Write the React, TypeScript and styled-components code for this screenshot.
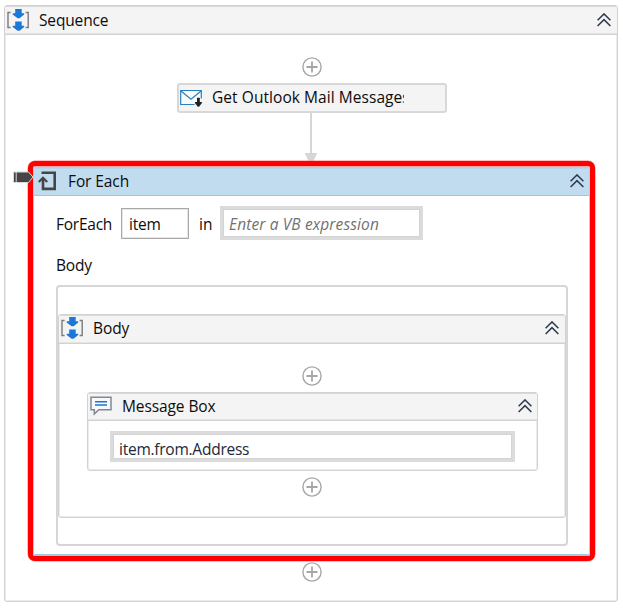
import React from "react";
import styled, { createGlobalStyle } from "styled-components";

const GlobalStyle = createGlobalStyle`
  * { box-sizing: border-box; }
  body {
    margin: 0;
    background: #fff;
    color: #0c0c0c;
    font-family: "Open Sans", "Noto Sans", sans-serif;
    font-size: 15.5px;
  }
  svg { display: block; flex: none; }
`;

const Page = styled.main`
  width: 623px;
  height: 612px;
  padding: 5px 0 0 4px;
  overflow: hidden;
`;

const Frame = styled.section<{ $w: number; $h: number; $top?: number; $left?: number }>`
  flex: none;
  width: ${(p) => p.$w}px;
  height: ${(p) => p.$h}px;
  margin-top: ${(p) => p.$top ?? 0}px;
  margin-left: ${(p) => p.$left ?? 0}px;
  border: 1px solid #d2d2d2;
  border-radius: 3px;
  box-shadow: inset 0 0 0 1px #ececec;
`;

const Header = styled.header<{ $h: number; $pad: number; $right: number; $lift?: number }>`
  display: flex;
  align-items: center;
  height: ${(p) => p.$h}px;
  padding: 0 ${(p) => p.$right}px ${(p) => p.$lift ?? 2}px ${(p) => p.$pad}px;
  background: #f4f4f4;
  border-top: 1px solid #dadada;
  border-bottom: 1px solid #d2d2d2;
  box-shadow: inset 0 -1px #e4e4e4;
`;

const SelectedHeader = styled(Header)`
  background: #c1dcee;
  border-top-color: #b4d6ec;
  border-bottom-color: #9cc8e3;
  box-shadow: none;
`;

const Title = styled.span<{ $gap: number; $track?: number }>`
  flex: 1;
  margin-left: ${(p) => p.$gap}px;
  line-height: 22px;
  white-space: nowrap;
  letter-spacing: ${(p) => p.$track ?? -0.1}px;
`;

const Column = styled.div<{ $left?: number }>`
  display: flex;
  flex-direction: column;
  align-items: center;
  padding-left: ${(p) => p.$left ?? 0}px;
`;

const PlusIcon = styled.svg<{ $top: number }>`
  width: 20px;
  height: 20px;
  margin-top: ${(p) => p.$top}px;
  fill: none;
  stroke: #a6a6a6;
`;

const Collapsed = styled.div`
  display: flex;
  align-items: center;
  width: 270px;
  height: 30px;
  margin-top: 6px;
  padding-left: 1px;
  border: 2px solid #d8d8d8;
  border-radius: 3px;
  background: #f4f4f4;
`;

const ClippedTitle = styled.span`
  width: 192px;
  margin: -2px 0 0 10px;
  line-height: 22px;
  overflow: hidden;
  white-space: nowrap;
  letter-spacing: 0.06px;
`;

const Highlight = styled.div`
  position: relative;
  width: 567px;
  height: 400px;
  margin-right: 1px;
  border: 5px solid #f00;
  border-radius: 7px;
  background: #fff;
  box-shadow: 0 0 0 0.5px #ff8080, inset 0 1px #f3a8ae;
  padding-top: 1px;
`;

const Breakpoint = styled.svg`
  position: absolute;
  left: -20px;
  top: 5px;
`;

const Selected = styled.section`
  height: 389px;
  border: 1px solid #abd0e8;
  border-bottom: 2px solid #9fcbe8;
  border-radius: 2px;
`;

const Fields = styled.div`
  display: flex;
  align-items: center;
  height: 34px;
  margin-top: 10px;
  padding-left: 22px;
`;

const Label = styled.span<{ $w: number; $indent?: number; $track?: number }>`
  flex: none;
  width: ${(p) => p.$w}px;
  padding-left: ${(p) => p.$indent ?? 0}px;
  padding-top: 2px;
  line-height: 22px;
  letter-spacing: ${(p) => p.$track ?? 0}px;
`;

const VariableBox = styled.div`
  width: 68px;
  height: 31px;
  border: 1px solid #a8a8a8;
  box-shadow: inset 0 0 0 1px #e6e6e6;
  padding-left: 7px;
  line-height: 31px;
  letter-spacing: -0.25px;
`;

const ExpressionBox = styled.div<{ $w: number; $h: number; $top?: number; $left?: number }>`
  width: ${(p) => p.$w}px;
  height: ${(p) => p.$h}px;
  margin-top: ${(p) => p.$top ?? 0}px;
  margin-left: ${(p) => p.$left ?? 0}px;
  border: 3px solid #dbdbdb;
  box-shadow: inset 0 0 0 1px #d4d4d4;
  padding-left: 6px;
  line-height: 30px;
  white-space: nowrap;
  color: #20293a;
  letter-spacing: -0.25px;
`;

const Placeholder = styled.em`
  color: #717171;
  letter-spacing: 0.12px;
`;

const BodyLabel = styled.div`
  height: 22px;
  margin: 14px 0 9px 22px;
  line-height: 22px;
  letter-spacing: -0.15px;
`;

const DropZone = styled.div`
  width: 512px;
  height: 261px;
  margin-left: 22px;
  border: 2px solid #d6d6d6;
  border-radius: 4px;
`;

function Add({ top }: { top: number }) {
  return (
    <PlusIcon $top={top} viewBox="0 0 20 20">
      <circle cx="10" cy="10" r="9.1" strokeWidth="1.4" />
      <path d="M10 4.5v11M4.5 10h11" strokeWidth="1.8" />
    </PlusIcon>
  );
}

function Chevrons() {
  return (
    <svg width="14" height="14" viewBox="0 0 14 14" fill="none" stroke="#2f3b4f" strokeWidth="1.5">
      <path d="M.6 7.3 7 .9l6.4 6.4M.6 13 7 6.6l6.4 6.4" />
    </svg>
  );
}

function SequenceIcon() {
  return (
    <svg width="22" height="22" viewBox="0 0 22 22">
      <path d="M3.6 3.500H1v15h2.600M18.600 3.500h2.600v15h-2.600" fill="none" stroke="#7b7b7b" strokeWidth="1.400" />
      <path d="M8.200 0h6.500v4.300h2.500v1.200L12.600 9.200h-2L5.700 5.500V4.300h2.500zM8.200 12.500h6.500v4.300h2.500V18L12.600 21.700h-2L5.700 18v-1.200h2.500z" fill="#1b78d8" />
    </svg>
  );
}

function MailIcon() {
  return (
    <svg width="22" height="18" viewBox="0 0 22 18">
      <path d="M14.500 15.500H.700V1.500h20.600v8" fill="#f8fbfd" stroke="#2b7fba" strokeWidth="1.200" />
      <path d="m1 2 10 8.300L21 2" fill="none" stroke="#2b7fba" strokeWidth="1.200" />
      <path d="M17 8.800h2.800v4.200h2.100v1L19 17.800h-1.200L14.900 14v-1H17z" fill="#202020" />
    </svg>
  );
}

function LoopIcon() {
  return (
    <svg width="19" height="20" viewBox="0 0 19 20" fill="none" stroke="#454545" strokeWidth="2.600">
      <path d="M3.500 1.700h13.200v16.200H5V7.500" />
      <path d="M.800 11 5 6.800 9.200 11" strokeWidth="2.300" />
    </svg>
  );
}

function MessageIcon() {
  return (
    <svg width="22" height="20" viewBox="0 0 22 20" fill="none">
      <path d="M1 1.200h20v12.600H8.800L4.300 18v-4.200H1z" fill="#f8f8f8" stroke="#7e8a93" strokeWidth="1.500" />
      <path d="M5 5.700h12M5 9h12" stroke="#1c73dc" strokeWidth="1.400" />
    </svg>
  );
}

export default function App() {
  return (
    <>
      <GlobalStyle />
      <Page>
        <Frame $w={614} $h={597}>
          <Header $h={29} $pad={2} $right={6}>
            <SequenceIcon />
            <Title $gap={10} $track={-0.15}>Sequence</Title>
            <Chevrons />
          </Header>
          <Column $left={2}>
            <Add top={22} />
            <Collapsed>
              <MailIcon />
              <ClippedTitle>Get Outlook Mail Messages</ClippedTitle>
            </Collapsed>
            <svg width="14" height="48" viewBox="0 0 14 48" fill="#d6d6d6">
              <path d="M5 0h2v40h5.300L8.500 48h-5L-.3 40H5z" />
            </svg>
            <Highlight>
              <Selected>
                <SelectedHeader $h={28} $pad={4} $right={5}>
                  <LoopIcon />
                  <Title $gap={11}>For Each</Title>
                  <Chevrons />
                </SelectedHeader>
                <Fields>
                  <Label $w={65} $track={-0.25}>ForEach</Label>
                  <VariableBox>item</VariableBox>
                  <Label $w={31} $indent={10}>in</Label>
                  <ExpressionBox $w={203} $h={34}>
                    <Placeholder>Enter a VB expression</Placeholder>
                  </ExpressionBox>
                </Fields>
                <BodyLabel>Body</BodyLabel>
                <DropZone>
                  <Frame $w={508} $h={204} $top={27}>
                    <Header $h={29} $pad={2} $right={6} $lift={4}>
                      <SequenceIcon />
                      <Title $gap={10}>Body</Title>
                      <Chevrons />
                    </Header>
                    <Column>
                      <Add top={22} />
                      <Frame $w={451} $h={79} $top={6} $left={1}>
                        <Header $h={28} $pad={2} $right={5}>
                          <MessageIcon />
                          <Title $gap={10}>Message Box</Title>
                          <Chevrons />
                        </Header>
                        <ExpressionBox $w={405} $h={31} $top={10} $left={22}>item.from.Address</ExpressionBox>
                      </Frame>
                      <Add top={6} />
                    </Column>
                  </Frame>
                </DropZone>
              </Selected>
              <Breakpoint width="22" height="13" viewBox="0 0 22 13">
                <path d="M.500 1h15l4.500 5-4.500 5.500H.500z" fill="#454545" stroke="#d8d8d8" strokeWidth="1" />
                <path d="M3.200 1v10" stroke="#d8d8d8" strokeWidth="1" />
              </Breakpoint>
            </Highlight>
            <Add top={1} />
          </Column>
        </Frame>
      </Page>
    </>
  );
}
